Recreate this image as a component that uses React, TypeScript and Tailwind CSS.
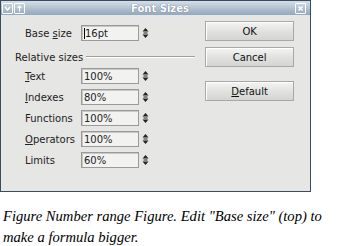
import React from "react";

const rows = [
  { label: "Text", mn: "T", rest: "ext", value: "100%" },
  { label: "Indexes", mn: "I", rest: "ndexes", value: "80%" },
  { label: "Functions", mn: "", rest: "Functions", value: "100%" },
  { label: "Operators", mn: "O", rest: "perators", value: "100%" },
  { label: "Limits", mn: "", rest: "Limits", value: "60%" },
];

const Spinner: React.FC = () => (
  <svg width="7" height="12" viewBox="0 0 7 12" className="ml-[3px]">
    <path d="M3.5 1 L6.5 4.5 L0.5 4.5 Z" fill="#222" />
    <path d="M1.5 6 H5.5" stroke="#222" strokeWidth="1" />
    <path d="M3.5 11 L6.5 7.5 L0.5 7.5 Z" fill="#222" />
  </svg>
);

const Field: React.FC<{ value: string; caret?: boolean }> = ({ value, caret }) => (
  <div className="flex items-center">
    <div className="w-[58px] h-[16px] border border-[#9a9a9a] bg-[#f2f2f0] shadow-[inset_1px_1px_0_#c8c8c8] flex items-center pl-[2px] text-[10px] text-[#222]">
      {caret && <span className="w-px h-[11px] bg-black" />}
      {value}
    </div>
    <Spinner />
  </div>
);

const Btn: React.FC<{ children: React.ReactNode }> = ({ children }) => (
  <div className="w-[89px] h-[20px] border border-[#a8a8a6] bg-gradient-to-b from-[#f4f4f2] via-[#e2e2e0] to-[#d4d4d2] shadow-[inset_1px_1px_0_#fff] flex items-center justify-center text-[10px] text-[#111]">
    {children}
  </div>
);

export default function App() {
  return (
    <div className="w-[359px] h-[246px] bg-white" style={{ fontFamily: '"DejaVu Sans", sans-serif' }}>
      <div className="w-[311px] h-[192px] border border-[#3a4d60] bg-[#e6e6e4] flex flex-col">
        {/* Title bar */}
        <div className="h-[14px] bg-gradient-to-b from-[#d6dee7] to-[#93a7bc] flex items-center px-[1px]">
          <div className="w-[11px] h-[11px] border border-white rounded-[1px] flex items-center justify-center">
            <svg width="7" height="5" viewBox="0 0 7 5">
              <path d="M1 1 L3.5 4 L6 1" stroke="#fff" strokeWidth="1.4" fill="none" />
            </svg>
          </div>
          <div className="w-[11px] h-[11px] border border-white rounded-[1px] flex items-center justify-center ml-[1px]">
            <svg width="7" height="7" viewBox="0 0 7 7">
              <path d="M3.5 6.5 V1 M1.5 3 L3.5 1 L5.5 3" stroke="#fff" strokeWidth="1.2" fill="none" />
            </svg>
          </div>
          <div className="flex-1 text-center text-[10px] font-bold text-white [text-shadow:0_0_1px_#3c4e62]">
            Font Sizes
          </div>
          <div className="w-[11px] h-[11px] border border-white rounded-[1px] flex items-center justify-center mr-[3px]">
            <svg width="7" height="7" viewBox="0 0 7 7">
              <path d="M1.5 1.5 L5.5 5.5 M5.5 1.5 L1.5 5.5" stroke="#fff" strokeWidth="1.5" />
            </svg>
          </div>
        </div>

        {/* Body */}
        <div className="flex flex-1 text-[10px] text-[#222]">
          <div className="flex flex-col pt-[10px]">
            <div className="flex items-center h-[16px]">
              <span className="w-[80px] pl-[24px]">
                Base <span className="underline">s</span>ize
              </span>
              <Field value="16pt" caret />
            </div>
            <div className="flex items-center mt-[9px] mb-[4px] h-[14px] pl-[14px]">
              <span>Relative sizes</span>
              <div className="w-[109px] h-[2px] bg-[#a0a0a0] ml-[3px] border-b border-white" />
            </div>
            <div className="flex flex-col gap-[5px]">
              {rows.map((r) => (
                <div key={r.label} className="flex items-center h-[16px]">
                  <span className="w-[80px] pl-[24px]">
                    {r.mn && <span className="underline">{r.mn}</span>}
                    {r.rest}
                  </span>
                  <Field value={r.value} />
                </div>
              ))}
            </div>
          </div>
          <div className="flex flex-col pt-[6px] pl-[10px] gap-[6px]">
            <Btn>OK</Btn>
            <Btn>Cancel</Btn>
            <div className="mt-[8px]">
              <Btn>
                <span className="underline">D</span>efault
              </Btn>
            </div>
          </div>
        </div>
      </div>
      <p
        className="italic text-[14.6px] leading-[21px] text-black pl-[3px] pt-[14px] w-[335px]"
        style={{ fontFamily: '"Liberation Serif", serif' }}
      >
        Figure Number range Figure. Edit "Base size" (top) to make a formula bigger.
      </p>
    </div>
  );
}
